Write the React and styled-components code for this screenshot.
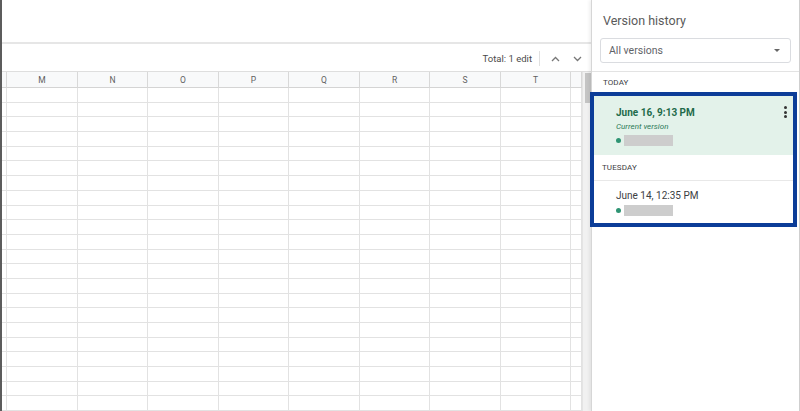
import React from "react"
import styled, { createGlobalStyle } from "styled-components"

const GlobalStyle = createGlobalStyle`
  html, body {
    margin: 0;
    padding: 0;
    background: #fff;
    font-family: Roboto, "Liberation Sans", Arial, sans-serif;
  }
`

const COLUMNS = ["M", "N", "O", "P", "Q", "R", "S", "T"]
const TEMPLATE = "5px 71px 70px 71px 70px 71px 70px 71px 70px 1fr"

const Frame = styled.div`
  width: 800px;
  height: 411px;
  display: flex;
  overflow: hidden;
`

const Sheet = styled.div`
  flex: 1;
  display: flex;
  flex-direction: column;
  border-left: 2px solid #5c5c5c;
  min-width: 0;
`

const TopBar = styled.div`
  height: 42px;
  border-bottom: 2px solid #e6e6e6;
`

const Toolbar = styled.div`
  height: 28px;
  box-sizing: border-box;
  padding: 2px 3px 0 0;
  display: flex;
  align-items: center;
  justify-content: flex-end;
  border-bottom: 1px solid #dedede;
`

const EditCount = styled.span`
  font-size: 9.5px;
  color: #4a4a4a;
  padding-right: 7px;
`

const ToolDivider = styled.span`
  width: 1px;
  height: 15px;
  background: #e0e0e0;
  margin-right: 4px;
`

const NavButton = styled.span`
  width: 22px;
  display: flex;
  justify-content: center;
  align-items: center;
`

const GridArea = styled.div`
  flex: 1;
  display: flex;
  min-height: 0;
`

const Grid = styled.div`
  flex: 1;
  overflow: hidden;
`

const Row = styled.div`
  display: grid;
  grid-template-columns: ${TEMPLATE};
  height: ${p => (p.$header ? "16px" : "14.7px")};
  background: ${p => (p.$header ? "#f8f9fa" : "#fff")};
  box-sizing: border-box;
`

const Cell = styled.div`
  box-sizing: border-box;
  border-right: 1px solid ${p => (p.$header ? "#d8d8d8" : "#e2e2e2")};
  border-bottom: 1px solid ${p => (p.$header ? "#d4d4d4" : "#e2e2e2")};
  font-size: 8.5px;
  color: #5f5f5f;
  display: flex;
  align-items: center;
  justify-content: center;
`

const ScrollTrack = styled.div`
  width: 8px;
  background: #f1f1f1;
  border-left: 1px solid #e4e4e4;
  padding-top: 1px;
`

const ScrollThumb = styled.div`
  height: 30px;
  margin-left: 2px;
  background: #c4c4c4;
`

const Panel = styled.aside`
  width: 207px;
  display: flex;
  flex-direction: column;
  border-left: 1px solid #d6d6d6;
  border-right: 1px solid #cfcfcf;
  box-shadow: -2px 0 3px rgba(0, 0, 0, 0.06);
  background: #fff;
`

const PanelHeader = styled.div`
  padding: 13px 8px 8px 8px;
  border-bottom: 1px solid #e3e3e3;
`

const PanelTitle = styled.div`
  font-size: 12.5px;
  color: #5a5a5a;
  padding-left: 3px;
  margin-bottom: 10px;
`

const Select = styled.div`
  height: 25px;
  box-sizing: border-box;
  border: 1px solid #dadce0;
  border-radius: 3px;
  display: flex;
  align-items: center;
  justify-content: space-between;
  padding: 0 10px 0 8px;
  font-size: 10.5px;
  color: #5f6368;
`

const Caret = styled.span`
  width: 0;
  height: 0;
  border-left: 3px solid transparent;
  border-right: 3px solid transparent;
  border-top: 3px solid #666;
`

const DayLabel = styled.div`
  height: ${p => p.$h || 20}px;
  display: flex;
  align-items: center;
  padding-left: ${p => p.$pad || 11}px;
  font-size: 8px;
  letter-spacing: 0.1px;
  color: #3c4043;
  text-transform: uppercase;
  border-bottom: ${p => (p.$line ? "1px solid #e8e8e8" : "none")};
`

const Highlight = styled.div`
  margin-left: -2px;
  margin-right: 2px;
  border: 4.5px solid #0c3d98;
  display: flex;
  flex-direction: column;
`

const Version = styled.div`
  position: relative;
  padding: ${p => (p.$current ? "11px 0 9px 22px" : "9px 0 7px 22px")};
  background: ${p => (p.$current ? "#e3f2ea" : "#fff")};
  display: flex;
  flex-direction: column;
  gap: 4px;
`

const VersionDate = styled.div`
  font-size: 10px;
  font-weight: ${p => (p.$current ? 700 : 400)};
  color: ${p => (p.$current ? "#1f6b4b" : "#3c4043")};
`

const CurrentTag = styled.div`
  font-size: 8px;
  font-style: italic;
  color: #2b7a57;
`

const Author = styled.div`
  display: flex;
  align-items: center;
  gap: 3px;
`

const Dot = styled.span`
  width: 5px;
  height: 5px;
  border-radius: 50%;
  background: #2e9473;
`

const NameBlur = styled.span`
  width: 49px;
  height: 11px;
  background: #cdcdcd;
`

const Kebab = styled.span`
  position: absolute;
  top: 10px;
  right: 6px;
  display: flex;
  flex-direction: column;
  gap: 1.5px;

  i {
    width: 3px;
    height: 3px;
    border-radius: 50%;
    background: #333;
  }
`

const Chevron = ({ up }) => (
  <svg width="9" height="6" viewBox="0 0 9 6">
    <path
      d={up ? "M1 5 L4.5 1.5 L8 5" : "M1 1 L4.5 4.5 L8 1"}
      fill="none"
      stroke="#777"
      strokeWidth="1.3"
    />
  </svg>
)

const App = () => (
  <Frame>
    <GlobalStyle />
    <Sheet>
      <TopBar />
      <Toolbar>
        <EditCount>Total: 1 edit</EditCount>
        <ToolDivider />
        <NavButton><Chevron up /></NavButton>
        <NavButton><Chevron /></NavButton>
      </Toolbar>
      <GridArea>
        <Grid>
          <Row $header>
            <Cell $header />
            {COLUMNS.map(c => (
              <Cell $header key={c}>{c}</Cell>
            ))}
            <Cell $header />
          </Row>
          {Array.from({ length: 23 }).map((_, r) => (
            <Row key={r}>
              <Cell />
              {COLUMNS.map(c => (
                <Cell key={c} />
              ))}
              <Cell />
            </Row>
          ))}
        </Grid>
        <ScrollTrack>
          <ScrollThumb />
        </ScrollTrack>
      </GridArea>
    </Sheet>

    <Panel>
      <PanelHeader>
        <PanelTitle>Version history</PanelTitle>
        <Select>
          All versions
          <Caret />
        </Select>
      </PanelHeader>
      <DayLabel>Today</DayLabel>
      <Highlight>
        <Version $current>
          <VersionDate $current>June 16, 9:13 PM</VersionDate>
          <CurrentTag>Current version</CurrentTag>
          <Author>
            <Dot />
            <NameBlur />
          </Author>
          <Kebab>
            <i />
            <i />
            <i />
          </Kebab>
        </Version>
        <DayLabel $h={25} $pad={8} $line>Tuesday</DayLabel>
        <Version>
          <VersionDate>June 14, 12:35 PM</VersionDate>
          <Author>
            <Dot />
            <NameBlur />
          </Author>
        </Version>
      </Highlight>
    </Panel>
  </Frame>
)

export default App
